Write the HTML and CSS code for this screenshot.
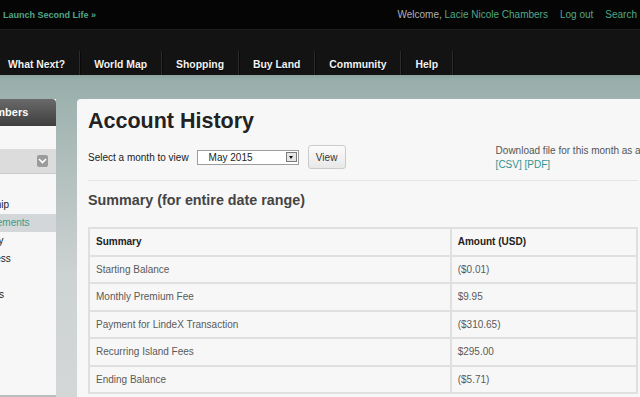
FILE: index.html
```html
<!DOCTYPE html>
<html lang="en">
<head>
  <meta charset="UTF-8">
  <title>Account History</title>
  <link rel="stylesheet" href="styles.css">
</head>
<body>

  <div class="topbar">
    <a class="launch" href="#">Launch Second Life &raquo;</a>
    <div class="account">
      <span class="welcome">Welcome, <a href="#">Lacie Nicole Chambers</a></span>
      <a href="#">Log out</a>
      <a href="#">Search</a>
    </div>
  </div>

  <div class="nav">
    <ul>
      <li><a href="#">What Next?</a></li>
      <li><a href="#">World Map</a></li>
      <li><a href="#">Shopping</a></li>
      <li><a href="#">Buy Land</a></li>
      <li><a href="#">Community</a></li>
      <li><a href="#">Help</a></li>
    </ul>
  </div>

  <div class="page">
    <div class="sidebar">
      <div class="side-title">Members</div>
      <div class="side-gap"></div>
      <div class="side-bar">
        <span class="side-toggle">
          <svg width="9" height="6" viewBox="0 0 9 6"><path d="M1 1 L4.5 4.5 L8 1" fill="none" stroke="#fff" stroke-width="1.6"/></svg>
        </span>
      </div>
      <ul class="side-menu">
        <li>Membership</li>
        <li class="current">Land Statements</li>
        <li>Tax History</li>
        <li>Land Access</li>
        <li>Groups</li>
        <li>Land Sales</li>
      </ul>
    </div>

    <div class="panel">
      <h1>Account History</h1>

      <div class="controls">
        <span class="label">Select a month to view</span>
        <span class="select">
          <span class="select-value">May 2015</span>
          <span class="select-arrow"></span>
        </span>
        <button class="view">View</button>
        <div class="download">
          Download file for this month as a:<br>
          <a href="#">[CSV]</a> <a href="#">[PDF]</a>
        </div>
      </div>

      <h2>Summary (for entire date range)</h2>

      <table class="summary">
        <tr>
          <th class="first">Summary</th>
          <th>Amount (USD)</th>
        </tr>
        <tr><td>Starting Balance</td><td>($0.01)</td></tr>
        <tr><td>Monthly Premium Fee</td><td>$9.95</td></tr>
        <tr><td>Payment for LindeX Transaction</td><td>($310.65)</td></tr>
        <tr><td>Recurring Island Fees</td><td>$295.00</td></tr>
        <tr><td>Ending Balance</td><td>($5.71)</td></tr>
      </table>
    </div>
  </div>

</body>
</html>
```

FILE: styles.css
```css
html, body {
  margin: 0;
  height: 397px;
  overflow: hidden;
}

body {
  font-family: 'Liberation Sans', Arial, sans-serif;
  background: #d0d4d4;
}

a {
  text-decoration: none;
}

.topbar {
  height: 29px;
  background: #050505;
  border-bottom: 1px solid #1e1e1e;
  display: flex;
  justify-content: space-between;
  align-items: center;
  padding: 0 3px;
  font-size: 10px;
}

.topbar a {
  color: #4fa886;
}

.launch {
  font-weight: bold;
  font-size: 9px;
}

.account {
  display: flex;
  gap: 12px;
}

.welcome {
  color: #aeb0bc;
}

.nav {
  height: 45px;
  background: #131313;
  display: flex;
  align-items: flex-end;
}

.nav ul {
  list-style: none;
  margin: 0;
  padding: 0;
  display: flex;
}

.nav li {
  height: 24px;
  line-height: 24px;
  padding: 0 14px;
  border-right: 1px solid #2c2c2c;
  box-shadow: 1px 0 0 #0a0a0a;
}

.nav li:first-child {
  padding-left: 8px;
}

.nav a {
  color: #f2f2f2;
  font-weight: bold;
  font-size: 10.4px;
  text-shadow: 0 1px 1px #000;
}

.page {
  display: flex;
  align-items: flex-start;
  height: 322px;
  padding-top: 24px;
  box-sizing: border-box;
  background: linear-gradient(#8ea4a0 0, #98aeaa 4px, #a8b9b6 60px, #cdd2d2 200px, #d3d7d7 100%);
}

/* sidebar, cut off by the left edge of the window */
.sidebar {
  width: 102px;
  margin-left: -46px;
  height: 296px;
  background: #f7f7f7;
  border-bottom: 2px solid #b9bdbd;
  overflow: hidden;
  flex-shrink: 0;
}

.side-title {
  height: 27px;
  line-height: 27px;
  padding-left: 26px;
  background: linear-gradient(#6a6a6a, #3e3e3e);
  border-top-right-radius: 4px;
  color: #fff;
  font-weight: bold;
  font-size: 11px;
}

.side-gap {
  height: 23px;
}

.side-bar {
  height: 24px;
  background: #dcdcdc;
  border-bottom: 1px solid #c9c9c9;
  display: flex;
  justify-content: flex-end;
  align-items: center;
  padding-right: 8px;
}

.side-toggle {
  width: 11px;
  height: 12px;
  background: #9b9b9b;
  border-radius: 2px;
  display: flex;
  align-items: center;
  justify-content: center;
}

.side-menu {
  list-style: none;
  margin: 0;
  padding: 22px 0 0;
  font-size: 10px;
  color: #222;
}

.side-menu li {
  height: 18px;
  line-height: 18px;
  white-space: nowrap;
}

.side-menu li.current {
  background: #d4d7da;
  color: #3d9a82;
}

/* main panel */
.panel {
  flex: 1;
  margin-left: 21px;
  height: 298px;
  box-sizing: border-box;
  background: #f7f7f7;
  border-top-left-radius: 4px;
  padding: 9px 2px 0 11px;
  overflow: hidden;
  color: #222;
}

h1 {
  margin: 0;
  font-size: 21.5px;
  line-height: 27px;
  color: #222;
}

.controls {
  display: flex;
  align-items: center;
  margin-top: 10px;
  height: 24px;
  font-size: 10px;
  padding-bottom: 11px;
  border-bottom: 1px solid #e4e4e4;
}

.label {
  color: #222;
  white-space: nowrap;
  margin-right: 8px;
}

.select {
  width: 100px;
  height: 13px;
  flex-shrink: 0;
  border: 1px solid #9c9c9c;
  background: #fff;
  display: flex;
  align-items: center;
  justify-content: space-between;
  margin-right: 9px;
}

.select-value {
  padding-left: 11px;
  color: #222;
}

.select-arrow {
  width: 11px;
  height: 10px;
  margin-right: 1px;
  background: #e6e6e6;
  border: 1px solid #7a7a7a;
  box-sizing: border-box;
  display: flex;
  align-items: center;
  justify-content: center;
}

.select-arrow::after {
  content: "";
  border-left: 2.5px solid transparent;
  border-right: 2.5px solid transparent;
  border-top: 3px solid #111;
}

.view {
  width: 38px;
  height: 24px;
  flex-shrink: 0;
  border: 1px solid #cbcbcb;
  border-radius: 3px;
  background: linear-gradient(#fbfbfb, #e8e8e8);
  font-family: inherit;
  font-size: 10px;
  color: #333;
  padding: 0;
}

.download {
  margin: 1px 0 0 150px;
  white-space: nowrap;
  line-height: 14px;
  color: #555;
}

.download a {
  color: #2f9393;
}

h2 {
  margin: 10px 0 0;
  font-size: 14.3px;
  line-height: 18px;
  color: #444;
}

.summary {
  margin-top: 18px;
  width: 100%;
  border-collapse: collapse;
  font-size: 10px;
}

.summary th,
.summary td {
  border: 2px solid #e0e0e0;
  padding: 7px 6px;
  line-height: 11.5px;
  text-align: left;
}

.summary th {
  color: #222;
}

.summary th.first {
  width: 66%;
}

.summary td {
  color: #5a5a5a;
}
```
